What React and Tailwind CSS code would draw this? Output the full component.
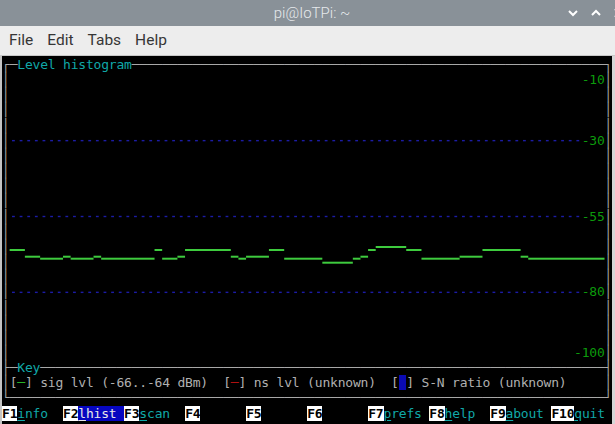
import React from "react";

const BD = "text-[#a8a8a8]";
const CY = "text-[#10a8a8]";
const GR = "text-[#0c9a0c]";
const GY = "text-[#b0b0b0]";
const RD = "text-[#b01010]";

const CW = 7.6267;
const RH = 15.17;

function Line({ children }) {
  return <div className="h-[15.17px] whitespace-pre">{children}</div>;
}

function Side({ children }) {
  return (
    <Line>
      <span className={BD}>│</span>
      {children}
      <span className={BD}>│</span>
    </Line>
  );
}

const segs = [
  [1, 3, 193],
  [3, 5, 199.7],
  [5, 8, 201.7],
  [8, 9, 199.7],
  [9, 12, 201.7],
  [12, 13, 199.7],
  [13, 20, 201.7],
  [20, 21, 193],
  [21, 23, 201.7],
  [23, 24, 199.7],
  [24, 30, 193],
  [30, 31, 199.7],
  [31, 32, 201.7],
  [32, 35, 199.7],
  [35, 37, 193],
  [37, 42, 201.7],
  [42, 46, 205.7],
  [46, 47, 201.7],
  [47, 48, 199.7],
  [48, 49, 193],
  [49, 53, 190],
  [53, 55, 193],
  [55, 60, 201.7],
  [60, 63, 199.7],
  [63, 68, 193],
  [68, 69, 199.7],
  [69, 79, 201.7],
];

const dashRows = [5, 10, 15];
const dashCols = Array.from({ length: 75 }, (_, i) => i + 1);

function DashRow({ label }) {
  return (
    <Side>
      {" ".repeat(75)}
      <span className={GR}>{label}</span>
    </Side>
  );
}

function Blank() {
  return <Side>{" ".repeat(78)}</Side>;
}

function FKey({ k, first, rest, active }) {
  return (
    <>
      <span className="bg-white text-black font-bold">{k}</span>
      {active ? (
        <span className="bg-[#0606c0] text-[#e8e8e8]">
          <span className="underline underline-offset-2">{first}</span>
          {rest}
        </span>
      ) : first ? (
        <span className={CY}>
          <span className="underline underline-offset-2">{first}</span>
          {rest}
        </span>
      ) : (
        <span>{rest}</span>
      )}
    </>
  );
}

export default function App() {
  return (
    <div className="w-[615px] h-[424px] overflow-hidden bg-black flex flex-col">
      {/* title bar */}
      <div className="h-[26px] bg-[#899198] flex items-center relative shrink-0">
        <div
          className="flex-1 text-center pl-[9px] text-[15px] text-[#e6e9ec]"
          style={{ fontFamily: "Roboto, 'Noto Sans', sans-serif", fontWeight: 300 }}
        >
          pi@IoTPi: ~
        </div>
        <div className="absolute -right-[9px] top-0 h-[26px] flex items-center gap-[13px]">
          <svg width="10" height="8" viewBox="0 0 10 8">
            <polyline points="1,2 5,6 9,2" fill="none" stroke="#ffffff" strokeWidth="2" />
          </svg>
          <svg width="10" height="8" viewBox="0 0 10 8">
            <polyline points="1,6 5,2 9,6" fill="none" stroke="#ffffff" strokeWidth="2" />
          </svg>
          <svg width="10" height="10" viewBox="0 0 10 10">
            <line x1="1" y1="1" x2="9" y2="9" stroke="#ffffff" strokeWidth="2" />
            <line x1="9" y1="1" x2="1" y2="9" stroke="#ffffff" strokeWidth="2" />
          </svg>
        </div>
      </div>
      {/* menu bar */}
      <div
        className="h-[30px] bg-[#ededed] border-b border-[#c8c8c8] flex items-center gap-[14px] pl-[9px] pt-[1px] text-[15.5px] text-[#363636] shrink-0"
        style={{ fontFamily: "Roboto, 'Noto Sans', sans-serif" }}
      >
        <span>File</span>
        <span>Edit</span>
        <span>Tabs</span>
        <span>Help</span>
      </div>
      {/* terminal */}
      <div className="flex flex-1 bg-black">
        <div className="w-[2px] bg-[#c4c4c4]" />
        <div
          className="relative w-[610px] pt-[1px] text-[13px] leading-[15.17px] tracking-[-0.2px] text-[#b0b0b0]"
          style={{ fontFamily: "'DejaVu Sans Mono', 'Liberation Mono', monospace" }}
        >
          <Line>
            <span className={BD}>┌─</span>
            <span className={CY}>Level histogram</span>
            <span className={BD}>{"─".repeat(62) + "┐"}</span>
          </Line>
          <Side>
            {" ".repeat(75)}
            <span className={GR}>-10</span>
          </Side>
          <Blank />
          <Blank />
          <Blank />
          <DashRow label="-30" />
          <Blank />
          <Blank />
          <Blank />
          <Blank />
          <DashRow label="-55" />
          <Blank />
          <Blank />
          <Blank />
          <Blank />
          <DashRow label="-80" />
          <Blank />
          <Blank />
          <Blank />
          <Side>
            {" ".repeat(74)}
            <span className={GR}>-100</span>
          </Side>
          <Line>
            <span className={BD}>├─</span>
            <span className={CY}>Key</span>
            <span className={BD}>{"─".repeat(74) + "┤"}</span>
          </Line>
          <Side>
            <span className={GY}>[</span>
            <span className="text-[#28b428]">─</span>
            <span className={GY}>] sig lvl (-66..-64 dBm)  [</span>
            <span className={RD}>─</span>
            <span className={GY}>] ns lvl (unknown)  [</span>
            <span className="bg-[#0a0ab4]"> </span>
            <span className={GY}>] S-N ratio (unknown)     </span>
          </Side>
          <Line>
            <span className={BD}>{"└" + "─".repeat(78) + "┘"}</span>
          </Line>
          <Line>
            <FKey k="F1" first="i" rest="nfo  " />
            <FKey k="F2" first="l" rest="hist " active />
            <FKey k="F3" first="s" rest="can  " />
            <FKey k="F4" rest="      " />
            <FKey k="F5" rest="      " />
            <FKey k="F6" rest="      " />
            <FKey k="F7" first="p" rest="refs " />
            <FKey k="F8" first="h" rest="elp  " />
            <FKey k="F9" first="a" rest="bout " />
            <FKey k="F10" first="q" rest="uit " />
          </Line>
          <svg
            className="absolute left-0 top-[1px]"
            width="610"
            height="367"
            viewBox="0 0 610 367"
          >
            {dashRows.map((r) =>
              dashCols.map((c) => (
                <rect
                  key={r + "-" + c}
                  x={c * CW + 2.4}
                  y={r * RH + 7.1}
                  width={2.8}
                  height={1.4}
                  fill="#1c1ca6"
                />
              ))
            )}
            {segs.map(([s, e, y], i) => (
              <rect
                key={i}
                x={s * CW}
                y={y - 1}
                width={(e - s) * CW}
                height={2}
                fill="#3ecb3e"
              />
            ))}
          </svg>
        </div>
        <div className="w-[3px] bg-[#d6d6d6]" />
      </div>
    </div>
  );
}
